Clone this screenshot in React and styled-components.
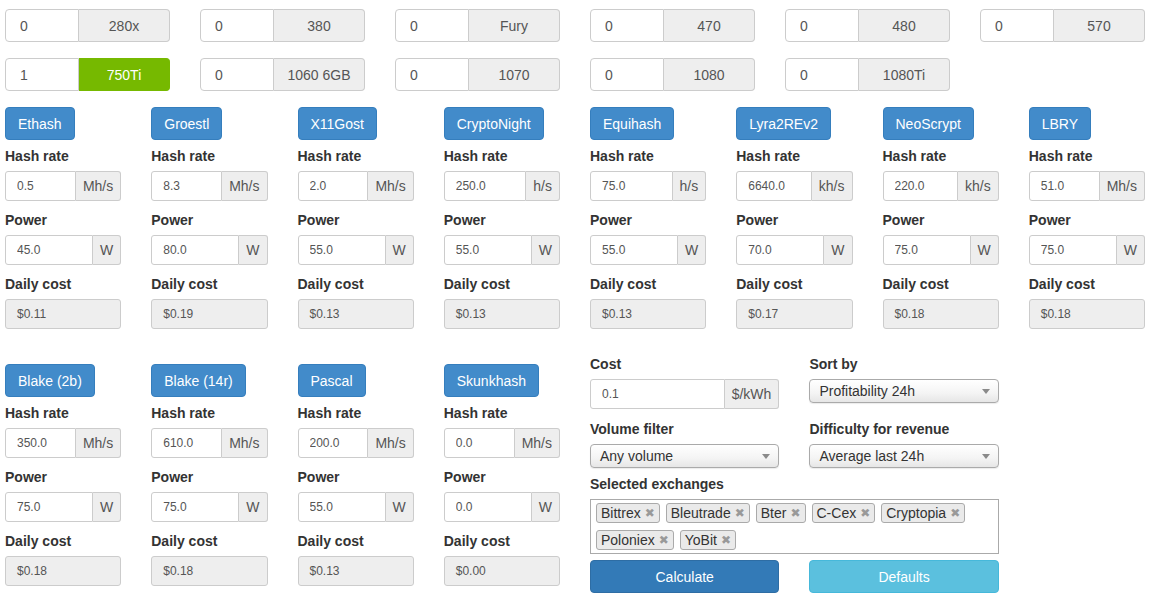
import React from "react";
import styled, { createGlobalStyle } from "styled-components";

const GlobalStyle = createGlobalStyle`
  * { box-sizing: border-box; }
  body {
    margin: 0;
    background: #fff;
    color: #333;
    font-family: "Liberation Sans", Arial, sans-serif;
    font-size: 14px;
  }
`;

const Page = styled.div`
  padding: 9px 0 0 5px;
  width: 1152px;
`;

const GpuGrid = styled.div`
  display: grid;
  width: 1140px;
  grid-template-columns: repeat(6, minmax(0, 1fr));
  column-gap: 30px;
  row-gap: 16px;
`;

const GpuGroup = styled.div`
  display: flex;
  height: 33px;
`;

const GpuInput = styled.input`
  width: 74px;
  height: 100%;
  border: 1px solid #ccc;
  border-radius: 4px 0 0 4px;
  padding: 0 14px;
  font: inherit;
  color: #555;
  background: #fff;
  outline: none;
`;

const GpuAddon = styled.div`
  flex: 1;
  display: flex;
  align-items: center;
  justify-content: center;
  border: 1px solid ${(p) => (p.$active ? "#76b900" : "#ccc")};
  border-left: 0;
  border-radius: 0 4px 4px 0;
  background: ${(p) => (p.$active ? "#76b900" : "#eee")};
  color: ${(p) => (p.$active ? "#fff" : "#555")};
  font-size: 14px;
`;

const MainGrid = styled.div`
  display: grid;
  width: 1140px;
  margin-top: 6px;
  grid-template-columns: repeat(8, minmax(0, 1fr));
  column-gap: 30px;
  row-gap: 25px;
  align-items: start;
`;

const AlgoBlock = styled.div`
  min-width: 0;
  padding-top: 10px;
  display: flex;
  flex-direction: column;
  align-items: stretch;
`;

const AlgoButton = styled.button`
  align-self: flex-start;
  height: 33px;
  padding: 0 12px;
  margin-bottom: 6px;
  border: 1px solid #357ebd;
  border-radius: 4px;
  background: #428bca;
  color: #fff;
  font: inherit;
  font-size: 14px;
`;

const Field = styled.div`
  min-width: 0;
  display: flex;
  flex-direction: column;
  margin-bottom: ${(p) => p.$mb || 0}px;
`;

const Label = styled.label`
  display: block;
  font-weight: bold;
  font-size: 14px;
  line-height: 20px;
  margin-bottom: 5px;
  color: #333;
  white-space: nowrap;
`;

const SmGroup = styled.div`
  display: flex;
  height: 30px;
  min-width: 0;
`;

const SmInput = styled.input`
  flex: 1;
  width: 0;
  min-width: 0;
  height: 100%;
  border: 1px solid #ccc;
  border-radius: 3px 0 0 3px;
  padding: 0 11px;
  font: inherit;
  font-size: 12px;
  color: #555;
  background: #fff;
  outline: none;
`;

const SmAddon = styled.div`
  display: flex;
  align-items: center;
  justify-content: center;
  padding: 0 7px;
  border: 1px solid #ccc;
  border-left: 0;
  border-radius: 0 3px 3px 0;
  background: #eee;
  color: #555;
  font-size: 14px;
`;

const CostBox = styled.div`
  height: 30px;
  display: flex;
  align-items: center;
  padding: 0 11px;
  border: 1px solid #ccc;
  border-radius: 3px;
  background: #eee;
  color: #555;
  font-size: 12px;
`;

const Settings = styled.div`
  grid-column: span 3;
  min-width: 0;
  display: grid;
  grid-template-columns: repeat(2, minmax(0, 1fr));
  column-gap: 30px;
  row-gap: 6px;
  align-items: start;
`;

const Wide = styled.div`
  grid-column: span 2;
`;

const Select = styled.div`
  position: relative;
  height: 24px;
  display: flex;
  align-items: center;
  padding: 0 9px;
  border: 1px solid #aaa;
  border-radius: 4px;
  background: linear-gradient(to bottom, #ffffff 0%, #f4f4f4 60%, #e6e6e6 100%);
  box-shadow: 0 1px 1px rgba(0, 0, 0, 0.08);
  color: #333;
  font-size: 14px;
  &::after {
    content: "";
    position: absolute;
    right: 8px;
    top: 9px;
    border-left: 4px solid transparent;
    border-right: 4px solid transparent;
    border-top: 5px solid #8a8a8a;
  }
`;

const TagBox = styled.div`
  height: 55px;
  border: 1px solid #aaa;
  padding: 3px 5px;
  display: flex;
  flex-wrap: wrap;
  align-content: flex-start;
  column-gap: 6px;
  row-gap: 7px;
`;

const Tag = styled.span`
  display: inline-flex;
  align-items: center;
  gap: 4px;
  height: 20px;
  padding: 0 4px;
  border: 1px solid #aaa;
  border-radius: 3px;
  background: #eaeaea;
  color: #333;
  font-size: 14px;
`;

const TagX = styled.span`
  color: #999;
  font-family: "DejaVu Sans", sans-serif;
  font-size: 12px;
  line-height: 1;
`;

const ActionButton = styled.button`
  width: 100%;
  height: 33px;
  border: 1px solid ${(p) => (p.$info ? "#46b8da" : "#2e6da4")};
  border-radius: 4px;
  background: ${(p) => (p.$info ? "#5bc0de" : "#337ab7")};
  color: #fff;
  font: inherit;
  font-size: 14px;
`;

const gpus = [
  ["0", "280x"],
  ["0", "380"],
  ["0", "Fury"],
  ["0", "470"],
  ["0", "480"],
  ["0", "570"],
  ["1", "750Ti", true],
  ["0", "1060 6GB"],
  ["0", "1070"],
  ["0", "1080"],
  ["0", "1080Ti"],
];

const algosTop = [
  ["Ethash", "0.5", "Mh/s", "45.0", "$0.11"],
  ["Groestl", "8.3", "Mh/s", "80.0", "$0.19"],
  ["X11Gost", "2.0", "Mh/s", "55.0", "$0.13"],
  ["CryptoNight", "250.0", "h/s", "55.0", "$0.13"],
  ["Equihash", "75.0", "h/s", "55.0", "$0.13"],
  ["Lyra2REv2", "6640.0", "kh/s", "70.0", "$0.17"],
  ["NeoScrypt", "220.0", "kh/s", "75.0", "$0.18"],
  ["LBRY", "51.0", "Mh/s", "75.0", "$0.18"],
];

const algosBottom = [
  ["Blake (2b)", "350.0", "Mh/s", "75.0", "$0.18"],
  ["Blake (14r)", "610.0", "Mh/s", "75.0", "$0.18"],
  ["Pascal", "200.0", "Mh/s", "55.0", "$0.13"],
  ["Skunkhash", "0.0", "Mh/s", "0.0", "$0.00"],
];

const exchanges = ["Bittrex", "Bleutrade", "Bter", "C-Cex", "Cryptopia", "Poloniex", "YoBit"];

function Algo({ name, rate, unit, power, cost }) {
  return (
    <AlgoBlock>
      <AlgoButton>{name}</AlgoButton>
      <Field $mb={9}>
        <Label>Hash rate</Label>
        <SmGroup>
          <SmInput defaultValue={rate} />
          <SmAddon>{unit}</SmAddon>
        </SmGroup>
      </Field>
      <Field $mb={9}>
        <Label>Power</Label>
        <SmGroup>
          <SmInput defaultValue={power} />
          <SmAddon>W</SmAddon>
        </SmGroup>
      </Field>
      <Field>
        <Label>Daily cost</Label>
        <CostBox>{cost}</CostBox>
      </Field>
    </AlgoBlock>
  );
}

export default function App() {
  return (
    <Page>
      <GlobalStyle />
      <GpuGrid>
        {gpus.map(([n, name, active]) => (
          <GpuGroup key={name}>
            <GpuInput defaultValue={n} />
            <GpuAddon $active={active}>{name}</GpuAddon>
          </GpuGroup>
        ))}
      </GpuGrid>
      <MainGrid>
        {algosTop.map(([name, rate, unit, power, cost]) => (
          <Algo key={name} name={name} rate={rate} unit={unit} power={power} cost={cost} />
        ))}
        {algosBottom.map(([name, rate, unit, power, cost]) => (
          <Algo key={name} name={name} rate={rate} unit={unit} power={power} cost={cost} />
        ))}
        <Settings>
          <Field $mb={4}>
            <Label>Cost</Label>
            <SmGroup>
              <SmInput defaultValue="0.1" />
              <SmAddon>$/kWh</SmAddon>
            </SmGroup>
          </Field>
          <Field>
            <Label>Sort by</Label>
            <Select>Profitability 24h</Select>
          </Field>
          <Field>
            <Label>Volume filter</Label>
            <Select>Any volume</Select>
          </Field>
          <Field>
            <Label>Difficulty for revenue</Label>
            <Select>Average last 24h</Select>
          </Field>
          <Wide>
            <Label>Selected exchanges</Label>
            <TagBox>
              {exchanges.map((e) => (
                <Tag key={e}>
                  {e}
                  <TagX>✖</TagX>
                </Tag>
              ))}
            </TagBox>
          </Wide>
          <ActionButton>Calculate</ActionButton>
          <ActionButton $info>Defaults</ActionButton>
        </Settings>
      </MainGrid>
    </Page>
  );
}
